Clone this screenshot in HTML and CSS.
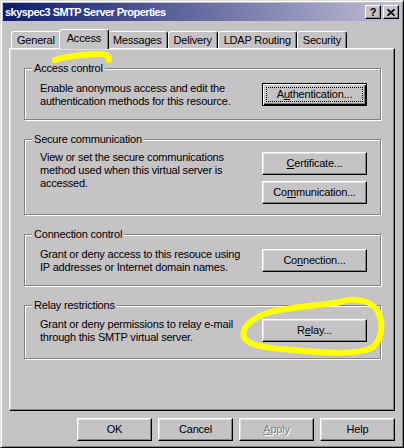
FILE: index.html
```html
<!DOCTYPE html>
<html lang="en">

<head>
    <meta charset="UTF-8">
    <title>skyspec3 SMTP Server Properties</title>
    <link rel="stylesheet" href="styles.css">
</head>

<body>

    <div class="window">
        <div class="titlebar">
            <span class="title">skyspec3 SMTP Server Properties</span>
            <div class="caption-buttons">
                <button class="cap-btn help-cap">?</button>
                <button class="cap-btn">
                    <svg width="8" height="7" viewBox="0 0 8 7">
                        <path d="M0.5 0.3 L7.5 6.7 M7.5 0.3 L0.5 6.7" stroke="#000" stroke-width="1.7" fill="none" />
                    </svg>
                </button>
            </div>
        </div>

        <div class="tabs">
            <div class="tab">General</div>
            <div class="tab active">Access</div>
            <div class="tab">Messages</div>
            <div class="tab">Delivery</div>
            <div class="tab">LDAP Routing</div>
            <div class="tab">Security</div>
        </div>

        <div class="panel">
            <div class="group">
                <span class="group-label">Access control</span>
                <p class="desc">Enable anonymous access and edit the<br>authentication methods for this resource.</p>
                <div class="actions">
                    <button class="btn default"><span class="focus">A<u>u</u>thentication...</span></button>
                </div>
            </div>

            <div class="group tight">
                <span class="group-label">Secure communication</span>
                <p class="desc">View or set the secure communications<br>method used when this virtual server is<br>accessed.</p>
                <div class="actions">
                    <button class="btn"><u>C</u>ertificate...</button>
                    <button class="btn">Co<u>m</u>munication...</button>
                </div>
            </div>

            <div class="group">
                <span class="group-label">Connection control</span>
                <p class="desc">Grant or deny access to this resouce using<br>IP addresses or Internet domain names.</p>
                <div class="actions">
                    <button class="btn">Co<u>n</u>nection...</button>
                </div>
            </div>

            <div class="group relay">
                <span class="group-label">Relay restrictions</span>
                <p class="desc">Grant or deny permissions to relay e-mail<br>through this SMTP virtual server.</p>
                <div class="actions">
                    <button class="btn">R<u>e</u>lay...</button>
                </div>
            </div>
        </div>

        <div class="dialog-buttons">
            <button class="btn wide">OK</button>
            <button class="btn wide">Cancel</button>
            <button class="btn wide disabled"><u>A</u>pply</button>
            <button class="btn wide">Help</button>
        </div>

        <!-- yellow marker scribbles drawn over the screenshot -->
        <svg class="marker" width="404" height="448" viewBox="0 0 404 448">
            <path d="M54 59 C62 56 72 55 82 54 C92 53 100 52 105 54 C108 55 108 57 108 59" />
            <path d="M336 302 C350 296 368 298 376 309 C383 321 382 337 372 346 C360 354 322 352 292 349 C266 347 247 345 243 336 C240 327 250 318 266 312 C286 306 314 305 340 301" />
        </svg>
    </div>

</body>

</html>
```

FILE: styles.css
```css
* {
    margin: 0;
    padding: 0;
    box-sizing: border-box;
    font-family: 'Liberation Sans', Arial, sans-serif;
}

body {
    background: #c6c3c6;
    color: #000;
    font-size: 11px;
}

.window {
    position: relative;
    width: 404px;
    height: 448px;
    display: flex;
    flex-direction: column;
    background: #c6c3c6;
    border: 1px solid;
    border-color: #dfdfdf #000 #000 #dfdfdf;
    box-shadow: inset 1px 1px #fff, inset -1px -1px #848284;
    padding: 2px 2px 6px 2px;
}

.titlebar {
    height: 18px;
    display: flex;
    align-items: center;
    justify-content: space-between;
    padding: 0 2px;
    background: linear-gradient(to right, #0c1c6e, #c2bed6);
}

.title {
    color: #fff;
    font-weight: bold;
    font-size: 11px;
    letter-spacing: -0.55px;
}

.caption-buttons {
    display: flex;
    gap: 2px;
}

.cap-btn {
    width: 16px;
    height: 14px;
    display: flex;
    align-items: center;
    justify-content: center;
    background: #c6c3c6;
    border: 1px solid;
    border-color: #fff #000 #000 #fff;
    box-shadow: inset -1px -1px #848284;
    font-size: 11px;
    font-weight: bold;
    line-height: 12px;
}

.tabs {
    display: flex;
    align-items: flex-end;
    height: 19px;
    margin: 8px 6px 0 8px;
}

.tab {
    height: 17px;
    padding: 2px 5px 0 5px;
    line-height: 13px;
    letter-spacing: -0.2px;
    border: 1px solid;
    border-bottom: none;
    border-color: #fff #000 #000 #fff;
    border-radius: 3px 3px 0 0;
    box-shadow: inset -1px 0 #848284;
    background: #c6c3c6;
}

.tab.active {
    position: relative;
    z-index: 1;
    height: 20px;
    margin: 0 -2px -1px -2px;
    padding: 2px 7px 0 7px;
}

.panel {
    flex: 1;
    margin: 0 6px;
    padding: 19px 13px 0 14px;
    display: flex;
    flex-direction: column;
    gap: 19px;
    border: 1px solid;
    border-color: #fff #000 #000 #fff;
    box-shadow: inset -1px -1px #848284, inset 1px 1px #dfdfdf;
}

.group {
    position: relative;
    display: flex;
    justify-content: space-between;
    align-items: flex-start;
    padding: 14px 13px 11px 15px;
    border: 1px solid #848284;
    box-shadow: 1px 1px 0 #fff, inset 1px 1px 0 #fff;
}

.group.tight {
    padding-top: 12px;
    padding-bottom: 10px;
}

.group.relay {
    padding-top: 13px;
    padding-bottom: 14px;
}

.group-label {
    position: absolute;
    top: -7px;
    left: 7px;
    padding: 0 2px;
    line-height: 13px;
    letter-spacing: -0.2px;
    background: #c6c3c6;
}

.desc {
    margin-top: -1px;
    line-height: 13px;
    letter-spacing: -0.2px;
}

.actions {
    display: flex;
    flex-direction: column;
    gap: 6px;
}

.btn {
    width: 105px;
    height: 23px;
    background: #c6c3c6;
    border: 1px solid;
    border-color: #fff #000 #000 #fff;
    box-shadow: inset -1px -1px #848284, inset 1px 1px #dfdfdf;
    font-size: 11px;
    line-height: 13px;
    letter-spacing: -0.2px;
    color: #000;
    text-align: center;
}

.btn.default {
    padding: 3px;
    border-color: #000;
    box-shadow: inset 1px 1px #fff, inset -1px -1px #000, inset -2px -2px #848284;
}

.focus {
    display: block;
    height: 15px;
    border: 1px dotted #000;
}

.dialog-buttons {
    display: flex;
    justify-content: flex-end;
    gap: 6px;
    margin: 7px 6px 0 0;
}

.btn.wide {
    width: 75px;
}

.btn.disabled {
    color: #848284;
    text-shadow: 1px 1px 0 #fff;
}

.marker {
    position: absolute;
    top: 0;
    left: 0;
    pointer-events: none;
}

.marker path {
    fill: none;
    stroke: #ffff00;
    stroke-width: 6;
    stroke-linecap: round;
    stroke-linejoin: round;
}
```
